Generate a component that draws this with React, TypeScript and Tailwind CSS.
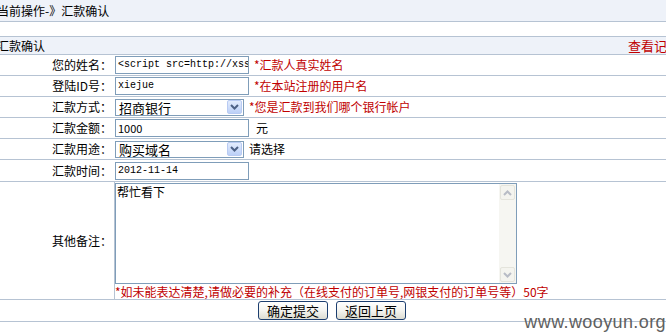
const font = { fontFamily: '"Noto Sans CJK SC", "Liberation Sans", sans-serif' }

function Arrow({ disabled = false, up = false }: { disabled?: boolean; up?: boolean }) {
  const color = disabled ? '#b8bcc6' : '#4d6185'
  return (
    <svg width="9" height="6" viewBox="0 0 9 6" className={up ? 'rotate-180' : ''}>
      <path d="M1 1 L4.5 4.5 L8 1" fill="none" stroke={color} strokeWidth="2" />
    </svg>
  )
}

function TextInput({ value, mono = true }: { value: string; mono?: boolean }) {
  return (
    <div
      className={`h-[18px] w-[134px] border border-[#7f9db9] bg-white pl-[2px] leading-[16px] overflow-hidden whitespace-nowrap text-black ${
        mono ? 'font-["Liberation_Mono"] text-[10px]' : 'text-[11px]'
      }`}
    >
      {value}
    </div>
  )
}

function Select({ value }: { value: string }) {
  return (
    <div className="flex h-[17px] w-[129px] items-center border border-[#7f9db9] bg-white">
      <span className="flex-1 pl-[3px] text-[13px] leading-[15px] text-black">{value}</span>
      <div className="mr-[1px] flex h-[14px] w-[15px] items-center justify-center rounded-[2px] border border-[#b9cbf3] bg-gradient-to-b from-[#e3ecfd] to-[#bcd0f7]">
        <Arrow />
      </div>
    </div>
  )
}

function Row({ label, children, first = false }: { label: string; children: React.ReactNode; first?: boolean }) {
  return (
    <div className={`flex items-center border-b border-[#b6c3d3] ${first ? 'h-[22px]' : 'h-[21px]'}`}>
      <div className="w-[114px] pr-[2px] text-right text-[12px] text-black">{label}</div>
      <div className="flex items-center pl-[1px]">{children}</div>
    </div>
  )
}

function Hint({ children, red = true }: { children: React.ReactNode; red?: boolean }) {
  return (
    <span className={`ml-[5px] text-[12px] ${red ? 'text-[#c00000]' : 'text-black'}`}>{children}</span>
  )
}

function Button({ label }: { label: string }) {
  return (
    <div className="flex h-[19px] w-[70px] items-center justify-center rounded-[3px] border border-[#1c3e6f] bg-gradient-to-b from-white via-[#f4f4f0] to-[#dcdcd2] text-[13px] leading-none text-black">
      {label}
    </div>
  )
}

export default function App() {
  return (
    <div className="relative h-[334px] w-[666px] overflow-hidden bg-white" style={font}>
      <div className="h-[22px] border-b border-[#b6c3d3] bg-[#eef2f9] text-[12px] leading-[21px] text-black">
        <span className="-ml-[3px]">当前操作-》汇款确认</span>
      </div>
      <div className="h-[14px]" />
      <div className="flex h-[19px] items-center justify-between border-y border-[#b6c3d3] bg-[#eef2f9] text-[12px] leading-none">
        <span className="-ml-[3px] text-black">汇款确认</span>
        <span className="-mr-[14px] whitespace-nowrap text-[13px] text-[#c00000]">查看记录</span>
      </div>

      <Row label="您的姓名：">
        <TextInput value="<script src=http://xss" />
        <Hint>*汇款人真实姓名</Hint>
      </Row>
      <Row label="登陆ID号：">
        <TextInput value="xiejue" />
        <Hint>*在本站注册的用户名</Hint>
      </Row>
      <Row label="汇款方式：">
        <Select value="招商银行" />
        <Hint>*您是汇款到我们哪个银行帐户</Hint>
      </Row>
      <Row label="汇款金额：">
        <TextInput value="1000" mono={false} />
        <Hint red={false}>
          <span className="ml-[2px]">元</span>
        </Hint>
      </Row>
      <Row label="汇款用途：">
        <Select value="购买域名" />
        <Hint red={false}>请选择</Hint>
      </Row>
      <Row label="汇款时间：" first>
        <TextInput value="2012-11-14" />
      </Row>

      <div className="flex h-[118px] items-center border-b border-[#b6c3d3]">
        <div className="w-[114px] pr-[2px] text-right text-[12px] text-black">其他备注：</div>
        <div className="flex h-full flex-col border-l border-[#b6c3d3] pt-[1px]">
          <div className="flex h-[101px] w-[402px] border border-[#7f9db9] bg-white">
            <div className="flex-1 pl-[1px] text-[12px] leading-[15px] text-black">帮忙看下</div>
            <div className="flex w-[17px] flex-col justify-between bg-[#f6f6f2] p-[1px]">
              <div className="flex h-[15px] items-center justify-center rounded-[2px] border border-[#e4e4dc] bg-[#f4f4ef]">
                <Arrow disabled up />
              </div>
              <div className="flex h-[15px] items-center justify-center rounded-[2px] border border-[#e4e4dc] bg-[#f4f4ef]">
                <Arrow disabled />
              </div>
            </div>
          </div>
          <div className="whitespace-nowrap text-[12px] leading-[15px] text-[#c00000]">
            *如未能表达清楚,请做必要的补充（在线支付的订单号,网银支付的订单号等）50字
          </div>
        </div>
      </div>

      <div className="flex h-[22px] items-center justify-center gap-[8px] border-b border-[#b6c3d3] pr-[2px]">
        <Button label="确定提交" />
        <Button label="返回上页" />
      </div>

      <div className="absolute bottom-[-2px] right-[0px] font-['Liberation_Sans'] text-[18px] tracking-[0.4px] text-[#606060]">
        www.wooyun.org
      </div>
    </div>
  )
}
